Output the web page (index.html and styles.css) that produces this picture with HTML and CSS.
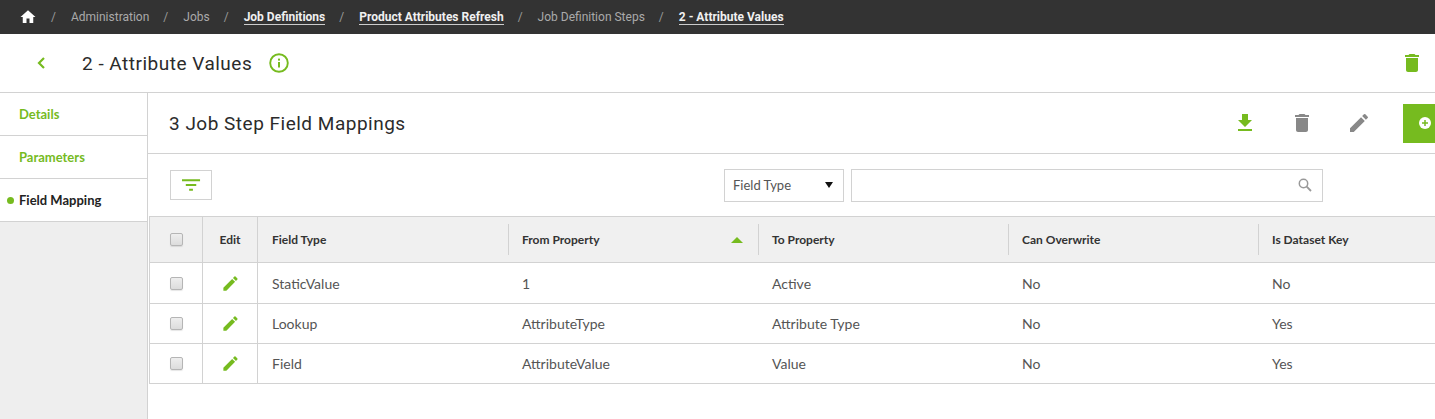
FILE: index.html
```html
<!DOCTYPE html>
<html lang="en">
<head>
<meta charset="utf-8">
<title>2 - Attribute Values</title>
<link rel="stylesheet" href="styles.css">
</head>
<body>
<nav class="crumbs">
  <svg class="home" viewBox="0 0 24 24"><path d="M10 20v-6h4v6h5v-8h3L12 3 2 12h3v8z"/></svg>
  <span class="sep">/</span><span class="crumb">Administration</span>
  <span class="sep">/</span><span class="crumb">Jobs</span>
  <span class="sep">/</span><a class="crumb link">Job Definitions</a>
  <span class="sep">/</span><a class="crumb link">Product Attributes Refresh</a>
  <span class="sep">/</span><span class="crumb">Job Definition Steps</span>
  <span class="sep">/</span><a class="crumb link">2 - Attribute Values</a>
</nav>
<header class="page-head">
  <svg class="back" viewBox="0 0 10 14"><path d="M8 2 3 7l5 5" fill="none" stroke="#76bb1f" stroke-width="2.2"/></svg>
  <h1>2 - Attribute Values</h1>
  <svg class="info" viewBox="0 0 20 20"><circle cx="10" cy="10" r="8.8" fill="none" stroke="#76bb1f" stroke-width="1.9"/><rect x="9" y="9" width="2" height="5.5" fill="#76bb1f"/><rect x="9" y="5.6" width="2" height="2" fill="#76bb1f"/></svg>
  <svg class="head-trash" viewBox="0 0 24 24"><path fill="#76bb1f" d="M6 19c0 1.1.9 2 2 2h8c1.1 0 2-.9 2-2V7H6v12zM19 4h-3.500l-1-1h-5l-1 1H5v2h14V4z"/></svg>
</header>
<div class="body">
  <aside class="side">
    <div class="tab">Details</div>
    <div class="tab">Parameters</div>
    <div class="tab active">Field Mapping</div>
  </aside>
  <main class="content">
    <div class="bar">
      <h2>3 Job Step Field Mappings</h2>
      <div class="actions">
        <svg class="act" viewBox="0 0 24 24"><path fill="#76bb1f" d="M19 9h-4V3H9v6H5l7 7 7-7zM5 18v2h14v-2H5z"/></svg>
        <svg class="act" viewBox="0 0 24 24"><path fill="#888" d="M6 19c0 1.100.9 2 2 2h8c1.100 0 2-.9 2-2V7H6v12zM19 4h-3.500l-1-1h-5l-1 1H5v2h14V4z"/></svg>
        <svg class="act" viewBox="0 0 24 24"><path fill="#888" d="M3 17.250V21h3.750L17.810 9.940l-3.750-3.750L3 17.250zM20.710 7.040a1 1 0 0 0 0-1.410l-2.340-2.340a1 1 0 0 0-1.410 0l-1.830 1.830 3.750 3.750 1.830-1.830z"/></svg>
        <div class="add"><svg viewBox="0 0 12 12"><circle cx="6" cy="6" r="6" fill="#fff"/><path d="M6 3v6M3 6h6" stroke="#76bb1f" stroke-width="1.500"/></svg></div>
      </div>
    </div>
    <div class="tools">
      <button class="filter"><svg viewBox="0 0 20 12"><path d="M0 0h19v2H0zM4 5h11v2H4zM7.500 10h4v2h-4z" fill="#76bb1f"/></svg></button>
      <div class="select">Field Type<span class="caret"></span></div>
      <div class="search"><svg viewBox="0 0 14 14"><circle cx="5.500" cy="5.500" r="4.200" fill="none" stroke="#999" stroke-width="1.500"/><path d="m8.700 8.700 4.300 4.300" stroke="#999" stroke-width="1.800"/></svg></div>
    </div>
    <div class="grid">
      <div class="row head">
        <div class="cell c-check"><span class="check"></span></div>
        <div class="cell c-edit">Edit</div>
        <div class="cell c-col"><span class="label">Field Type</span></div>
        <div class="cell c-col"><span class="label">From Property</span><span class="sort"></span></div>
        <div class="cell c-col"><span class="label">To Property</span></div>
        <div class="cell c-col"><span class="label">Can Overwrite</span></div>
        <div class="cell c-col"><span class="label">Is Dataset Key</span></div>
      </div>
      <div class="row">
        <div class="cell c-check"><span class="check"></span></div>
        <div class="cell c-edit"><svg class="pencil" viewBox="0 0 24 24"><use href="#pen"/></svg></div>
        <div class="cell c-col">StaticValue</div><div class="cell c-col">1</div><div class="cell c-col">Active</div><div class="cell c-col">No</div><div class="cell c-col">No</div>
      </div>
      <div class="row">
        <div class="cell c-check"><span class="check"></span></div>
        <div class="cell c-edit"><svg class="pencil" viewBox="0 0 24 24"><use href="#pen"/></svg></div>
        <div class="cell c-col">Lookup</div><div class="cell c-col">AttributeType</div><div class="cell c-col">Attribute Type</div><div class="cell c-col">No</div><div class="cell c-col">Yes</div>
      </div>
      <div class="row">
        <div class="cell c-check"><span class="check"></span></div>
        <div class="cell c-edit"><svg class="pencil" viewBox="0 0 24 24"><use href="#pen"/></svg></div>
        <div class="cell c-col">Field</div><div class="cell c-col">AttributeValue</div><div class="cell c-col">Value</div><div class="cell c-col">No</div><div class="cell c-col">Yes</div>
      </div>
    </div>
  </main>
</div>
<svg class="defs" width="0" height="0"><defs><path id="pen" fill="#76bb1f" d="M3 17.250V21h3.750L17.810 9.940l-3.750-3.750L3 17.250zM20.710 7.040a1 1 0 0 0 0-1.410l-2.340-2.340a1 1 0 0 0-1.410 0l-1.830 1.830 3.750 3.750 1.830-1.830z"/></defs></svg>
</body>
</html>
```
FILE: styles.css
```css
* { box-sizing: border-box; }
html, body { margin: 0; height: 419px; overflow: hidden; }
body { font-family: "Lato", "Liberation Sans", sans-serif; color: #333; background: #fff; width: 1435px; }
.defs { display: block; height: 0; }

.crumbs { height: 34px; background: #333; display: flex; align-items: center; padding-left: 19px; font-family: "Roboto", sans-serif; font-size: 12px; color: #aaa; }
.home { width: 18px; height: 18px; fill: #fff; flex: none; }
.sep { margin: 0 15px 0 14px; color: #999; }
.crumb { white-space: nowrap; }
.link { color: #f0f0f0; font-weight: 700; border-bottom: 1px solid #ccc; line-height: 14px; }

.page-head { height: 59px; display: flex; align-items: center; border-bottom: 1px solid #d2d2d2; padding-left: 36px; }
.back { width: 10px; height: 14px; flex: none; }
.page-head h1 { margin: 0 0 0 36px; font-size: 19px; font-weight: 400; font-family: "Roboto", sans-serif; color: #2b2b2b; letter-spacing: .5px; }
.info { width: 20px; height: 20px; margin-left: 17px; flex: none; }
.head-trash { width: 24px; height: 24px; margin-left: auto; margin-right: 11px; flex: none; }

.body { display: flex; height: 326px; }
.side { width: 148px; flex: none; background: #eee; border-right: 1px solid #d2d2d2; }
.tab { height: 43px; background: #fff; border-bottom: 1px solid #d2d2d2; padding-left: 19px; display: flex; align-items: center; font-size: 13px; font-weight: 700; color: #76bb1f; position: relative; }
.active { color: #222; }
.active::before { content: ""; position: absolute; left: 7px; top: 18px; width: 7px; height: 7px; border-radius: 50%; background: #76bb1f; }

.content { flex: 1; min-width: 0; }
.bar { height: 61px; border-bottom: 1px solid #d2d2d2; display: flex; align-items: center; justify-content: space-between; padding-left: 21px; }
.bar h2 { margin: 0; font-family: "Roboto", sans-serif; font-size: 19px; font-weight: 400; color: #2b2b2b; letter-spacing: .5px; }
.actions { display: flex; align-items: center; gap: 33px; margin-top: 0; }
.act { width: 24px; height: 24px; flex: none; }
.add { width: 32px; height: 39px; background: #76bb1f; display: flex; align-items: center; padding-left: 16px; margin-left: -1px; margin-bottom: 0; }
.add svg { width: 12px; height: 12px; }

.tools { height: 62px; display: flex; align-items: center; padding-left: 22px; }
.filter { width: 42px; height: 30px; background: #fff; border: 1px solid #d2d2d2; padding: 0; display: flex; align-items: center; justify-content: center; }
.filter svg { width: 19px; height: 12px; }
.select { width: 120px; height: 33px; margin-left: 512px; border: 1px solid #d2d2d2; display: flex; align-items: center; justify-content: space-between; padding: 0 10px 0 8px; font-size: 13px; color: #555; }
.caret { width: 0; height: 0; border-left: 4px solid transparent; border-right: 4px solid transparent; border-top: 6px solid #111; }
.search { width: 472px; height: 33px; margin-left: 7px; border: 1px solid #d2d2d2; display: flex; align-items: center; justify-content: flex-end; padding-right: 10px; }
.search svg { width: 14px; height: 14px; }

.grid { margin-left: 1px; border-left: 1px solid #d2d2d2; width: 1290px; }
.row { display: flex; height: 40px; border-bottom: 1px solid #d2d2d2; font-size: 14px; color: #555; }
.row:nth-child(2) { height: 41px; }
.head { height: 47px; background: #f0f0f0; border-top: 1px solid #d2d2d2; font-size: 12px; font-weight: 700; color: #333; }
.cell { display: flex; align-items: center; flex: none; }
.c-check { width: 53px; border-right: 1px solid #d2d2d2; justify-content: center; }
.c-edit { width: 55px; border-right: 1px solid #d2d2d2; justify-content: center; }
.c-col { width: 250px; padding-left: 14px; position: relative; }
.head .c-col:not(:first-of-type)::before { content: ""; }
.head .c-col + .c-col::after { content: ""; position: absolute; left: 0; top: 7px; bottom: 7px; width: 1px; background: #d2d2d2; }
.sort { position: absolute; right: 15px; top: 20px; width: 0; height: 0; border-left: 6px solid transparent; border-right: 6px solid transparent; border-bottom: 6px solid #76bb1f; }
.check { width: 13px; height: 13px; border: 1px solid #b5b5b5; border-radius: 2px; background: linear-gradient(#eee, #dcdcdc); box-shadow: 0 1px 1px rgba(0,0,0,.1); }
.pencil { width: 19px; height: 19px; }
```
